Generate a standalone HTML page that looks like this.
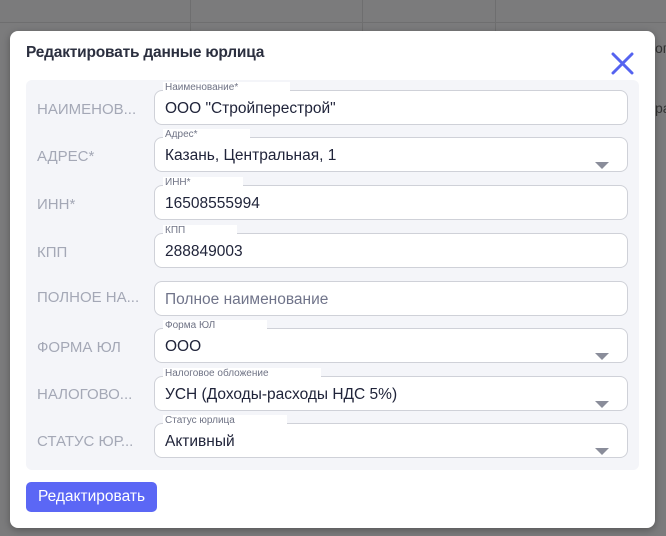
<!DOCTYPE html>
<html><head><meta charset="utf-8"><style>
*{box-sizing:border-box;margin:0;padding:0}
body{width:666px;height:536px;overflow:hidden;background:#7b7b7c;font-family:"Liberation Sans",sans-serif;position:relative}
.bgl{position:absolute;background:#6e6e6f}
.modal{position:absolute;left:10px;top:31px;width:645px;height:497px;background:#fff;border-radius:8px;box-shadow:0 2px 8px rgba(0,0,0,.3)}
.title{position:absolute;left:16px;top:13px;font-size:15.5px;font-weight:bold;color:#2b2f3f;letter-spacing:-.2px}
.panel{position:absolute;left:16px;top:49px;width:613px;height:390px;background:#f4f5f9;border-radius:6px}
.lbl{position:absolute;left:11px;font-size:15px;color:#a4a8b6}
.f{position:absolute;left:128px;width:474px;height:35px;background:#fff;border:1.5px solid #cfd1d8;border-radius:8px}
.f .v{position:absolute;left:10px;top:9px;font-size:15.5px;color:#20243a}
.f .ph{color:#70748a}
.f .lg{position:absolute;left:8px;top:-9px;font-size:10px;color:#6f7385;background:#fff;padding:0 2px;width:auto}
.f .lg span{display:inline-block;padding-right:50px}
.f .ar{position:absolute;right:18px;top:24px;width:0;height:0;border-left:7px solid transparent;border-right:7px solid transparent;border-top:7px solid #8a8d9a}
.btn{position:absolute;left:16px;top:451px;width:131px;height:30px;background:#5b67f5;border-radius:5px;color:#fff;font-size:15.5px;text-align:center;line-height:30px}
</style></head><body>
<div class="bgl" style="left:0;top:22px;width:666px;height:1px"></div>
<div class="bgl" style="left:190px;top:0;width:1px;height:31px"></div>
<div class="bgl" style="left:362px;top:0;width:1px;height:31px"></div>
<div class="bgl" style="left:495px;top:0;width:1px;height:31px"></div>
<div style="position:absolute;left:655px;top:40px;font-size:14px;color:#333">ог</div>
<div style="position:absolute;left:655px;top:100px;font-size:14px;color:#333">ра</div>
<div class="modal">
<div class="title">Редактировать данные юрлица</div>
<svg style="position:absolute;left:601px;top:21px" width="23" height="23" viewBox="0 0 23 23"><path d="M2 2L21 21M21 2L2 21" stroke="#5563f0" stroke-width="3" stroke-linecap="round"/></svg>
<div class="panel">
<div class="lbl" style="top:21px">НАИМЕНОВ...</div>
<div class="f" style="top:10px"><div class="lg"><span>Наименование*</span></div><div class="v">ООО "Стройперестрой"</div></div>
<div class="lbl" style="top:68px">АДРЕС*</div>
<div class="f" style="top:57px"><div class="lg"><span>Адрес*</span></div><div class="v">Казань, Центральная, 1</div><div class="ar"></div></div>
<div class="lbl" style="top:116px">ИНН*</div>
<div class="f" style="top:105px"><div class="lg"><span>ИНН*</span></div><div class="v">16508555994</div></div>
<div class="lbl" style="top:164px">КПП</div>
<div class="f" style="top:153px"><div class="lg"><span>КПП</span></div><div class="v">288849003</div></div>
<div class="lbl" style="top:209px">ПОЛНОЕ НА...</div>
<div class="f" style="top:201px"><div class="v ph">Полное наименование</div></div>
<div class="lbl" style="top:259px">ФОРМА ЮЛ</div>
<div class="f" style="top:248px"><div class="lg"><span>Форма ЮЛ</span></div><div class="v">ООО</div><div class="ar"></div></div>
<div class="lbl" style="top:306px">НАЛОГОВО...</div>
<div class="f" style="top:296px"><div class="lg"><span>Налоговое обложение</span></div><div class="v">УСН (Доходы-расходы НДС 5%)</div><div class="ar"></div></div>
<div class="lbl" style="top:353px">СТАТУС ЮР...</div>
<div class="f" style="top:343px"><div class="lg"><span>Статус юрлица</span></div><div class="v">Активный</div><div class="ar"></div></div>
</div>
<div class="btn">Редактировать</div>
</div>
</body></html>
